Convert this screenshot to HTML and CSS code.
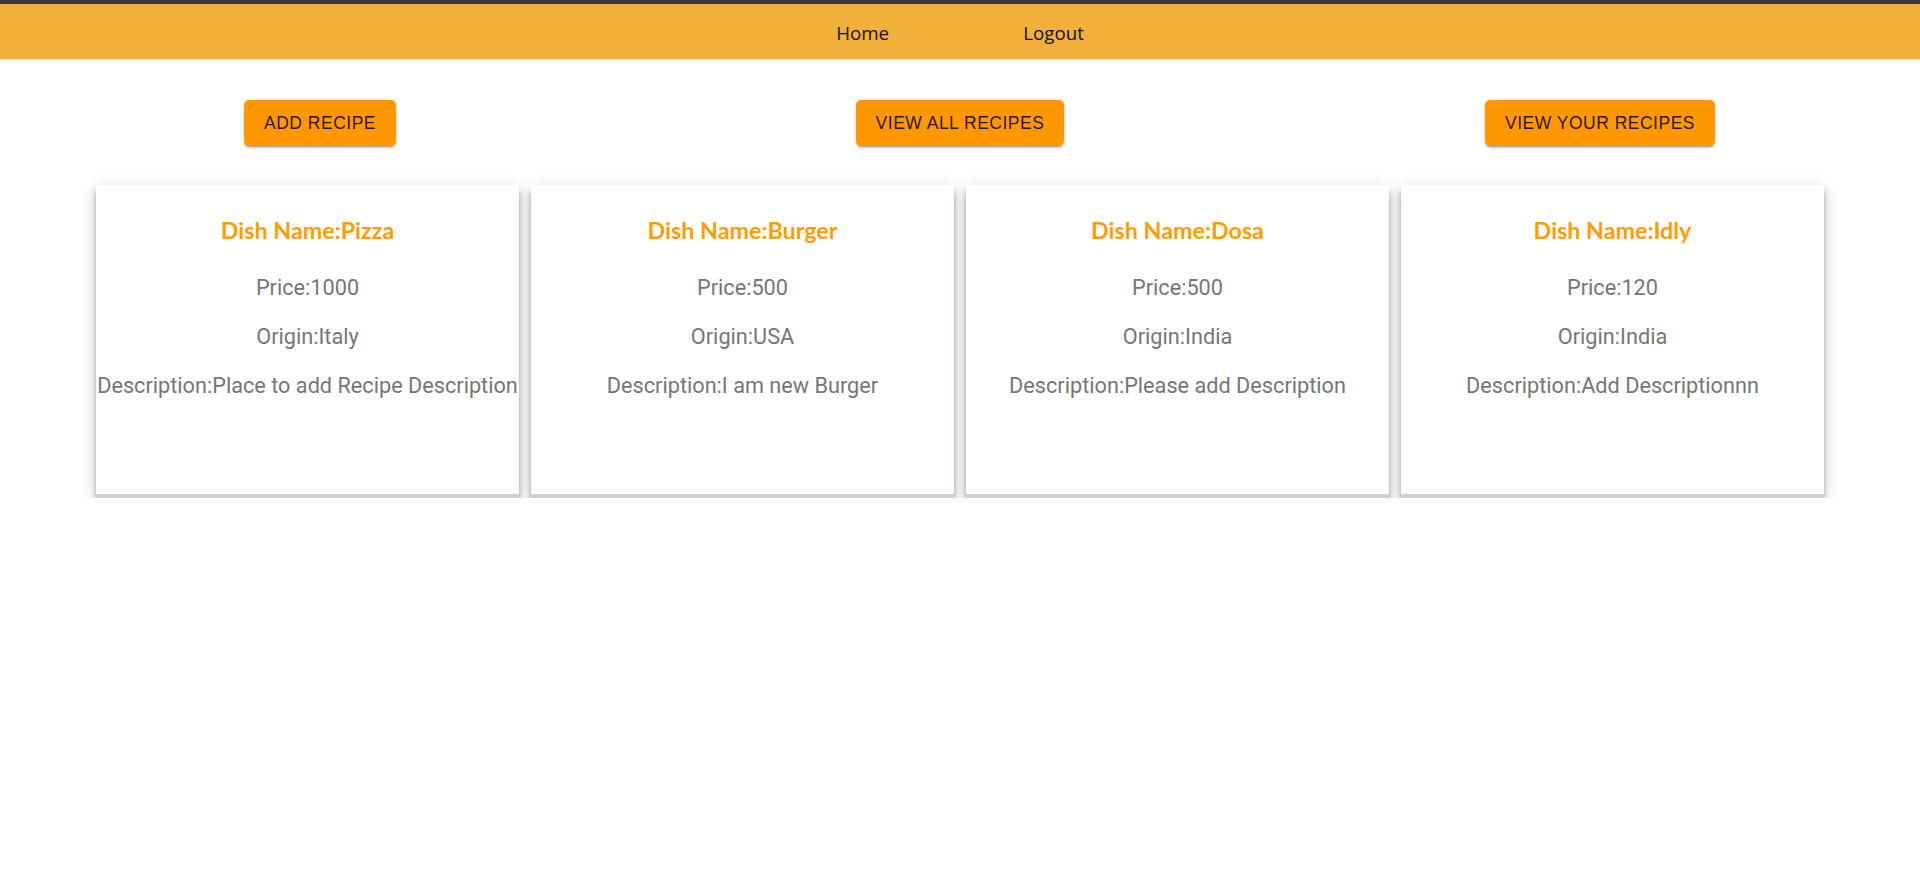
FILE: index.html
```html
<!DOCTYPE html>
<html lang="en">
<head>
<meta charset="utf-8">
<title>Recipes</title>
<link rel="stylesheet" href="styles.css">
</head>
<body>
<nav class="topbar">
  <a class="nav-link" href="#">Home</a>
  <a class="nav-link" href="#">Logout</a>
</nav>
<main class="page">
  <div class="actions">
    <div class="action-cell"><button class="btn">Add Recipe</button></div>
    <div class="action-cell"><button class="btn">View All Recipes</button></div>
    <div class="action-cell"><button class="btn">View Your Recipes</button></div>
  </div>
  <div class="cards">
    <div class="card">
      <h3 class="dish">Dish Name:Pizza</h3>
      <p class="info">Price:1000</p>
      <p class="info">Origin:Italy</p>
      <p class="info">Description:Place to add Recipe Description</p>
    </div>
    <div class="card">
      <h3 class="dish">Dish Name:Burger</h3>
      <p class="info">Price:500</p>
      <p class="info">Origin:USA</p>
      <p class="info">Description:I am new Burger</p>
    </div>
    <div class="card">
      <h3 class="dish">Dish Name:Dosa</h3>
      <p class="info">Price:500</p>
      <p class="info">Origin:India</p>
      <p class="info">Description:Please add Description</p>
    </div>
    <div class="card">
      <h3 class="dish">Dish Name:Idly</h3>
      <p class="info">Price:120</p>
      <p class="info">Origin:India</p>
      <p class="info">Description:Add Descriptionnn</p>
    </div>
  </div>
</main>
</body>
</html>
```

FILE: styles.css
```css
html, body {
  margin: 0;
  padding: 0;
  background: #ffffff;
}

body {
  font-family: "Open Sans", "Noto Sans", sans-serif;
}

.topbar {
  border-top: 4px solid #3a3a3a;
  height: 55px;
  background: #f1b03a;
  display: flex;
  justify-content: center;
  align-items: center;
  gap: 134px;
}

.nav-link {
  color: #111;
  text-decoration: none;
  font-family: "Open Sans", sans-serif;
  font-size: 18.75px;
  line-height: 24px;
  margin-top: 3px;
}

.page {
  padding-top: 41px;
}

.actions {
  display: grid;
  grid-template-columns: repeat(3, minmax(0, 1fr));
}

.action-cell {
  display: flex;
  justify-content: center;
}

.btn {
  background: #ff9800;
  color: rgba(0, 0, 0, 0.87);
  border: none;
  border-radius: 5px;
  padding: 7.5px 20px;
  font-family: "Liberation Sans", Arial, sans-serif;
  font-size: 17.5px;
  line-height: 30.6px;
  letter-spacing: 0.02857em;
  text-transform: uppercase;
  box-shadow: 0 3px 1px -2px rgba(0,0,0,0.2), 0 2px 2px 0 rgba(0,0,0,0.14), 0 1px 5px 0 rgba(0,0,0,0.12);
  cursor: pointer;
}

.cards {
  margin: 39px 96px 0;
  display: grid;
  grid-template-columns: repeat(4, minmax(0, 1fr));
  gap: 12px;
}

.card {
  box-sizing: border-box;
  height: 313px;
  padding-top: 31px;
  background: #fff;
  text-align: center;
  border-bottom: 4px solid #d0d0d0;
  box-shadow: 0 6px 6px -1px rgba(0,0,0,0.4), 0 4px 16px rgba(0,0,0,0.18);
}

.dish {
  margin: 0 0 30px;
  font-family: Lato, "Open Sans", sans-serif;
  font-weight: 700;
  font-size: 23.3px;
  line-height: 28px;
  color: #ff9c00;
}

.info {
  margin: 0 0 21px;
  font-family: Roboto, "Liberation Sans", sans-serif;
  font-size: 21.7px;
  line-height: 28px;
  color: #767676;
  white-space: nowrap;
}
```
